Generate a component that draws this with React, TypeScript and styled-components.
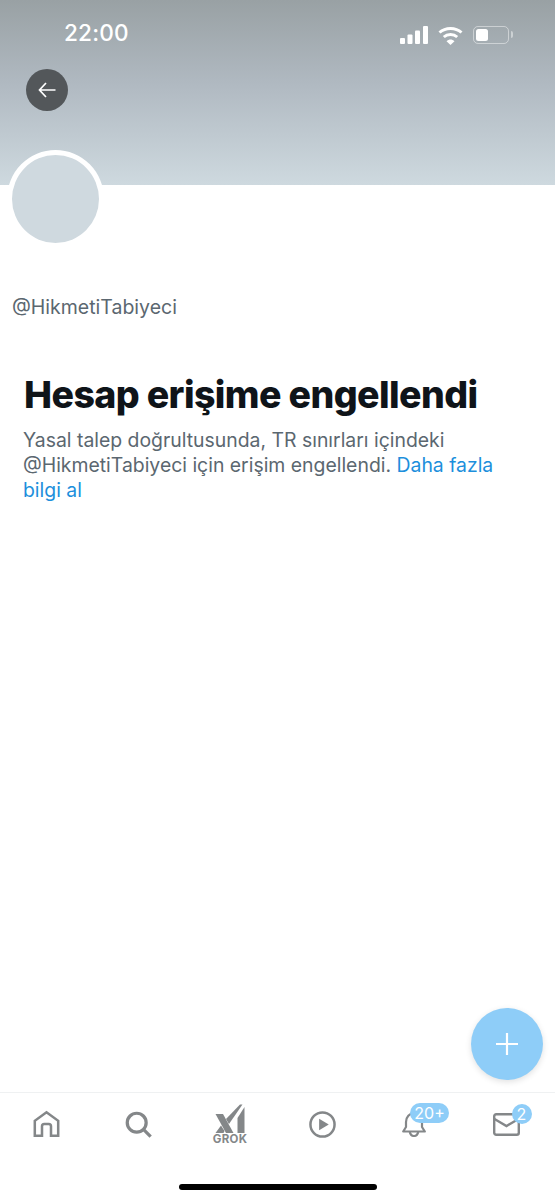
import styled, { createGlobalStyle } from "styled-components";

const GlobalStyle = createGlobalStyle`
  html, body {
    margin: 0;
    padding: 0;
    background: #fff;
  }

  svg {
    display: block;
  }
`;

const GREY = "#848789";

const HomeIcon = () => (
  <svg width="27" height="28" viewBox="0 0 30 30" fill="none" stroke={GREY} strokeWidth="2.8">
    <path d="M2 28V11.5L15 2L28 11.5V28H20V17.5Q20 15 17.5 15H12.5Q10 15 10 17.5V28Z" />
  </svg>
);

const SearchIcon = () => (
  <svg width="27" height="27" viewBox="0 0 30 30" fill="none" stroke={GREY} strokeWidth="3.6">
    <circle cx="13" cy="13" r="10.5" />
    <path d="M20.5 20.5L28.5 28.5" />
  </svg>
);

const GrokIcon = () => (
  <svg width="30" height="30" viewBox="0 0 30 30" fill={GREY}>
    <path d="M0.5 11H8L18.5 30H11Z" />
    <path d="M0.5 30L6 22.5L9.5 28L8.5 30Z" />
    <path d="M11 16L25 1.5H27.5L14 21Z" />
    <path d="M22.5 15L29.5 4V30H22.5Z" />
  </svg>
);

const PlayIcon = () => (
  <svg width="27" height="27" viewBox="0 0 28 28" fill="none">
    <circle cx="14" cy="14" r="12.5" stroke={GREY} strokeWidth="2.6" />
    <path d="M10.5 8L20.5 14L10.5 20Z" fill={GREY} />
  </svg>
);

const BellIcon = () => (
  <svg width="24" height="25" viewBox="0 0 24 25" fill="none" stroke={GREY} strokeWidth="2.2">
    <path d="M1.2 19.5L4 15V10C4 5 7.5 1.2 12 1.2S20 5 20 10V15L22.8 19.5Z" strokeLinejoin="round" />
    <path d="M7.8 20C8.3 22.5 10 24 12 24S15.7 22.5 16.2 20" />
  </svg>
);

const MailIcon = () => (
  <svg width="27" height="23" viewBox="0 0 27 23" fill="none" stroke={GREY} strokeWidth="2.4">
    <rect x="1.2" y="1.2" width="24.6" height="20.6" rx="2" />
    <path d="M1.5 6L13.5 13L25.5 6" />
  </svg>
);

const BackArrow = () => (
  <svg width="18" height="16" viewBox="0 0 18 16" fill="none" stroke="#fff" strokeWidth="1.7">
    <path d="M17.5 8H1.5M8 1L1.5 8L8 15" />
  </svg>
);

const SignalIcon = () => (
  <svg width="28" height="18" viewBox="0 0 28 18" fill="#fff">
    <rect x="0" y="12" width="5" height="6" rx="1" />
    <rect x="7.5" y="8.5" width="5" height="9.5" rx="1" />
    <rect x="15" y="4.5" width="5" height="13.5" rx="1" />
    <rect x="23" y="0" width="5" height="18" rx="1" />
  </svg>
);

const WifiIcon = () => (
  <svg width="25" height="19" viewBox="0 0 25 19" fill="none" stroke="#fff" strokeWidth="3">
    <path d="M1.5 6.5C7.5 1 17.5 1 23.5 6.5" />
    <path d="M5.8 11C9.5 7.7 15.5 7.7 19.2 11" />
    <path d="M8.5 15.2C11 13 14 13 16.5 15.2L12.5 19Z" fill="#fff" stroke="none" />
  </svg>
);

const Page = styled.div`
  position: relative;
  width: 555px;
  height: 1200px;
  overflow: hidden;
  display: flex;
  flex-direction: column;
  background: #fff;
  font-family: Inter, "Liberation Sans", sans-serif;
`;

const Banner = styled.header`
  position: relative;
  height: 185px;
  flex: none;
  box-sizing: border-box;
  padding: 0 26px;
  background: linear-gradient(180deg, #99a1a4 0%, #b0b9c1 45%, #ced9df 100%);
`;

const StatusBar = styled.div`
  height: 69px;
  display: flex;
  align-items: flex-start;
  justify-content: space-between;
  padding: 18px 20px 0 39px;
  box-sizing: border-box;
`;

const Clock = styled.span`
  color: #fff;
  font-size: 22.6px;
  line-height: 30px;
  font-weight: 500;
  letter-spacing: 0.2px;
  margin-left: -1px;
`;

const StatusIcons = styled.div`
  display: flex;
  align-items: center;
  gap: 10px;
  height: 30px;
  margin-top: 2px;
`;

const Battery = styled.div`
  position: relative;
  width: 36px;
  height: 18px;
  box-sizing: border-box;
  border: 1.5px solid rgba(255, 255, 255, 0.45);
  border-radius: 5px;
  padding: 2px;

  &::before {
    content: "";
    display: block;
    width: 12px;
    height: 100%;
    background: #fff;
    border-radius: 2.5px;
  }

  &::after {
    content: "";
    position: absolute;
    right: -5px;
    top: 4px;
    width: 2px;
    height: 7px;
    border-radius: 0 2px 2px 0;
    background: rgba(255, 255, 255, 0.45);
  }
`;

const BackButton = styled.button`
  width: 42px;
  height: 42px;
  padding: 0;
  border: none;
  border-radius: 50%;
  background: #53575a;
  display: flex;
  align-items: center;
  justify-content: center;
`;

const Avatar = styled.div`
  position: absolute;
  left: 7px;
  top: 150px;
  width: 87px;
  height: 88px;
  border: 5px solid #fff;
  border-radius: 50%;
  background: #cfd9df;
`;

const Content = styled.main`
  flex: 1;
  padding: 110px 12px 0;
`;

const Handle = styled.div`
  color: #5b6770;
  font-size: 19.5px;
  line-height: 24px;
`;

const Notice = styled.section`
  margin-top: 54px;
  padding: 0 12px;
`;

const Title = styled.h1`
  margin: 0 0 11px;
  color: #0f1419;
  font-size: 37.5px;
  line-height: 44px;
  font-weight: 800;
  letter-spacing: -0.6px;
  white-space: nowrap;
`;

const Body = styled.p`
  margin: 0 0 0 -1px;
  color: #5b6770;
  font-size: 19.4px;
  line-height: 25px;
  width: 480px;
`;

const LearnMore = styled.a`
  color: #1d8fdc;
`;

const Fab = styled.button`
  position: absolute;
  left: 471px;
  top: 1008px;
  width: 72px;
  height: 72px;
  padding: 0;
  border: none;
  border-radius: 50%;
  background: #8ecdf8;
  box-shadow: 0 2px 6px rgba(0, 0, 0, 0.12);
  display: flex;
  align-items: center;
  justify-content: center;
`;

const TabBar = styled.nav`
  flex: none;
  height: 108px;
  box-sizing: border-box;
  border-top: 1px solid #eff1f2;
  position: relative;
`;

const Tabs = styled.div`
  display: grid;
  grid-template-columns: repeat(6, 92px);
  height: 62px;
  align-items: center;
  justify-items: center;
`;

const Tab = styled.div`
  position: relative;
  display: flex;
  flex-direction: column;
  align-items: center;
`;

const GrokLabel = styled.span`
  color: ${GREY};
  font-size: 11.5px;
  line-height: 13px;
  font-weight: 700;
  letter-spacing: 0.3px;
`;

const Badge = styled.span<{ $left: number; $width: number }>`
  position: absolute;
  left: ${(p) => p.$left}px;
  top: -9px;
  width: ${(p) => p.$width}px;
  height: 20px;
  border-radius: 10px;
  background: #8ecdf8;
  color: #fff;
  font-size: 16px;
  line-height: 20px;
  text-align: center;
`;

const HomeIndicator = styled.div`
  position: absolute;
  left: 179px;
  bottom: 10px;
  width: 198px;
  height: 6px;
  border-radius: 3px;
  background: #000;
`;

export default function App() {
  return (
    <Page>
      <GlobalStyle />
      <Banner>
        <StatusBar>
          <Clock>22:00</Clock>
          <StatusIcons>
            <SignalIcon />
            <WifiIcon />
            <Battery />
          </StatusIcons>
        </StatusBar>
        <BackButton>
          <BackArrow />
        </BackButton>
        <Avatar />
      </Banner>
      <Content>
        <Handle>@HikmetiTabiyeci</Handle>
        <Notice>
          <Title>Hesap erişime engellendi</Title>
          <Body>
            Yasal talep doğrultusunda, TR sınırları içindeki @HikmetiTabiyeci
            için erişim engellendi. <LearnMore>Daha fazla bilgi al</LearnMore>
          </Body>
        </Notice>
      </Content>
      <Fab>
        <svg width="22" height="22" viewBox="0 0 22 22" stroke="#fff" strokeWidth="2.2">
          <path d="M11 0V22M0 11H22" />
        </svg>
      </Fab>
      <TabBar>
        <Tabs>
          <Tab>
            <HomeIcon />
          </Tab>
          <Tab>
            <SearchIcon />
          </Tab>
          <Tab>
            <GrokIcon />
            <GrokLabel>GROK</GrokLabel>
          </Tab>
          <Tab>
            <PlayIcon />
          </Tab>
          <Tab>
            <BellIcon />
            <Badge $left={8} $width={39}>20+</Badge>
          </Tab>
          <Tab>
            <MailIcon />
            <Badge $left={19} $width={20}>2</Badge>
          </Tab>
        </Tabs>
        <HomeIndicator />
      </TabBar>
    </Page>
  );
}
